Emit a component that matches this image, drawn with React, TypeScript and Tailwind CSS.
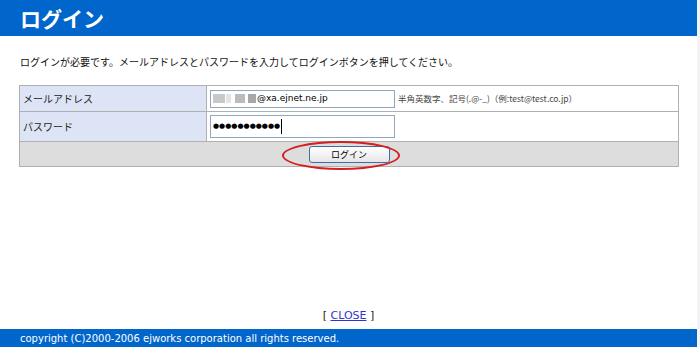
import React from 'react';

const jp = { fontFamily: '"Noto Sans CJK JP", "Noto Sans", sans-serif' };
const latin = { fontFamily: '"DejaVu Sans", sans-serif' };

const App: React.FC = () => {
  return (
    <div className="flex h-[347px] w-[700px] bg-white" style={jp}>
      <div className="flex w-[697px] flex-col">
        <div className="flex h-[36px] items-center bg-[#0066cc] pl-[20px]">
          <h1 className="text-[21px] font-bold leading-none text-white">ログイン</h1>
        </div>

        <p className="mt-[19px] pl-[20px] text-[10px] leading-[14px] text-[#111]">
          ログインが必要です。メールアドレスとパスワードを入力してログインボタンを押してください。
        </p>

        <table className="ml-[19px] mt-[16px] w-[660px] border-collapse border border-[#a8a8a8] text-[10px]">
          <tbody>
            <tr className="h-[26px]">
              <td className="w-[187px] border border-[#b0b0b0] bg-[#dde4f5] pl-[3px] text-[#222]">メールアドレス</td>
              <td className="border border-[#b0b0b0] pl-[3px]">
                <div className="flex items-center gap-[3px]">
                  <div className="flex h-[18px] w-[185px] items-center border border-[#8ea8bf] bg-white px-[2px]">
                    <span className="mr-[1px] h-[9px] w-[12px] bg-[#c8c8c8]" />
                    <span className="mr-[4px] h-[9px] w-[5px] bg-[#e4e4e4]" />
                    <span className="mr-[3px] h-[9px] w-[10px] bg-[#bcbcbc]" />
                    <span className="mr-[1px] h-[9px] w-[8px] bg-[#a8a8a8]" />
                    <span className="text-[9px] text-black" style={latin}>@xa.ejnet.ne.jp</span>
                  </div>
                  <span className="text-[8.5px] text-[#444]">半角英数字、記号(.@-_)（例:test@test.co.jp）</span>
                </div>
              </td>
            </tr>
            <tr className="h-[30px]">
              <td className="border border-[#b0b0b0] bg-[#dde4f5] pl-[3px] text-[#222]">パスワード</td>
              <td className="border border-[#b0b0b0] pl-[3px]">
                <div className="flex h-[23px] w-[185px] items-center border border-[#8ea8bf] bg-white px-[2px]">
                  <span className="text-[7px] leading-none text-black" style={latin}>●●●●●●●●●●●</span>
                  <span className="ml-[1px] h-[15px] w-[1px] bg-black" />
                </div>
              </td>
            </tr>
            <tr className="h-[25px]">
              <td colSpan={2} className="border border-[#b0b0b0] bg-[#dddddd] text-center">
                <div className="relative inline-flex items-center justify-center">
                  <div className="absolute left-[-27px] top-[-5px] h-[29px] w-[118px] rounded-[50%] border-2 border-[#d42020]" />
                  <button className="h-[17px] w-[81px] rounded-[3px] border border-[#3c6ea8] bg-gradient-to-b from-white to-[#e6e6e6] text-[9px] leading-none text-black">
                    ログイン
                  </button>
                </div>
              </td>
            </tr>
          </tbody>
        </table>

        <div className="mt-auto pb-[8px] text-center text-[11px] leading-none text-[#222]" style={latin}>
          [ <a href="#" className="text-[#3333cc] underline">CLOSE</a> ]
        </div>
        <div className="flex h-[18px] items-center bg-[#0066cc] pl-[20px] text-[10px] text-white" style={latin}>
          copyright (C)2000-2006 ejworks corporation all rights reserved.
        </div>
      </div>
      <div className="flex-1 bg-[#f3f3f3]" />
    </div>
  );
};

export default App;
